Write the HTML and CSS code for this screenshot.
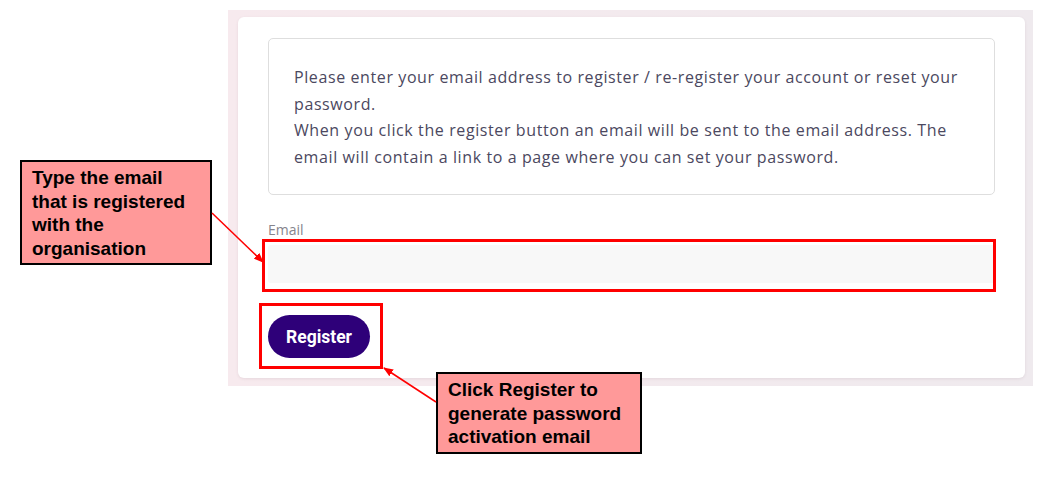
FILE: index.html
```html
<!DOCTYPE html>
<html lang="en">
<head>
  <meta charset="UTF-8" />
  <title>Register</title>
  <link rel="stylesheet" href="styles.css">
</head>
<body>

  <div class="panel">
    <div class="card">
      <div class="notice">
        <p>Please enter your email address to register / re-register your account or reset your password.<br>
        When you click the register button an email will be sent to the email address. The email will contain a link to a page where you can set your password.</p>
      </div>
      <label class="field-label" for="email">Email</label>
      <input class="field" type="email" id="email" />
      <button class="btn">Register</button>
    </div>
  </div>

  <!-- annotations -->
  <div class="mark mark-email"></div>
  <div class="mark mark-register"></div>

  <div class="callout callout-email">Type the email that is registered with the organisation</div>
  <div class="callout callout-register">Click Register to generate password activation email</div>

  <svg class="arrows" width="1047" height="486" viewBox="0 0 1047 486">
    <defs>
      <marker id="head" markerWidth="10" markerHeight="8" refX="9" refY="4" orient="auto" markerUnits="userSpaceOnUse">
        <path d="M0,0 L10,4 L0,8 z" fill="#ff0000" />
      </marker>
    </defs>
    <line x1="212" y1="213" x2="263" y2="262" stroke="#ff0000" stroke-width="1.5" marker-end="url(#head)" />
    <line x1="436" y1="402" x2="384" y2="368" stroke="#ff0000" stroke-width="1.5" marker-end="url(#head)" />
  </svg>

</body>
</html>
```

FILE: styles.css
```css
body {
  margin: 0;
  background: #fff;
  font-family: "Open Sans", sans-serif;
}

.panel {
  width: 805px;
  margin: 10px 0 0 228px;
  padding: 7px 8px 8px 10px;
  box-sizing: border-box;
  background: linear-gradient(90deg, #f7eaee, #efeaee);
}

.card {
  background: #fff;
  border-radius: 6px;
  padding: 21px 30px 20px 30px;
  box-shadow: 0 1px 3px rgba(120, 90, 110, 0.12);
}

.notice {
  border: 1px solid #dedede;
  border-radius: 5px;
  padding: 25px 25px 24px 25px;
}

.notice p {
  margin: 0;
  font-size: 16px;
  letter-spacing: 0.6px;
  line-height: 26.5px;
  color: #4b4860;
}

.field-label {
  display: block;
  margin-top: 27px;
  font-size: 14px;
  line-height: 16px;
  color: #85848c;
}

.field {
  display: block;
  width: 100%;
  height: 38px;
  margin-top: 7px;
  box-sizing: border-box;
  border: none;
  border-radius: 3px;
  background: #f8f8f8;
}

.btn {
  display: block;
  margin-top: 32px;
  width: 102px;
  height: 43px;
  border: none;
  border-radius: 22px;
  background: #2e0079;
  color: #fff;
  font-family: Roboto, sans-serif;
  font-weight: 700;
  font-size: 17.5px;
  cursor: pointer;
}

/* annotation overlays */
.mark {
  position: absolute;
  border: 3px solid #ff0000;
  box-sizing: border-box;
}

.mark-email {
  left: 262px;
  top: 239px;
  width: 734px;
  height: 53px;
}

.mark-register {
  left: 259px;
  top: 303px;
  width: 124px;
  height: 66px;
}

.callout {
  position: absolute;
  box-sizing: border-box;
  background: #ff9999;
  border: 2px solid #000;
  font-family: "Liberation Sans", Arial, sans-serif;
  font-weight: 700;
  font-size: 19px;
  line-height: 23.5px;
  color: #000;
  padding: 4px 8px 0 10px;
}

.callout-email {
  left: 20px;
  top: 160px;
  width: 192px;
  height: 105px;
}

.callout-register {
  left: 436px;
  top: 372px;
  width: 206px;
  height: 82px;
}

.arrows {
  position: absolute;
  left: 0;
  top: 0;
  pointer-events: none;
}
```
